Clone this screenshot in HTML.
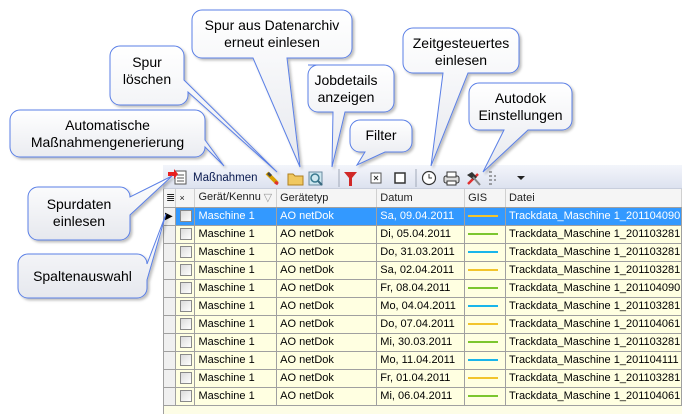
<!DOCTYPE html>
<html><head><meta charset="utf-8"><style>
*{margin:0;padding:0;box-sizing:border-box}
body{width:682px;height:414px;background:#fff;position:relative;overflow:hidden;font-family:"Liberation Sans",Tahoma,sans-serif}
#tb{position:absolute;left:163px;top:165px;width:519px;height:24px;background:linear-gradient(#f3f5fb,#dde2ef);border-bottom:1px solid #c8cedc}
#grid{position:absolute;left:163px;top:189px;width:519px;height:225px;background:#fdfde6;border-left:1px solid #a0a0a0}
table{border-collapse:collapse;font-size:11px;table-layout:fixed}
td{height:18px;border-right:1px solid #a0a0a0;border-bottom:1px solid #a0a0a0;padding-left:3px;white-space:nowrap;overflow:hidden;background:#ffffe1;color:#000}
th{height:18px;font-weight:normal;text-align:left;padding-left:3px;background:#f5f5f5;border-right:1px solid #d0d0d0;border-bottom:1px solid #a0a0a0;white-space:nowrap;overflow:hidden;color:#222}
td.ind{background:#f0f0f0;padding:0}
td.cb{padding-left:4px}
.box{display:inline-block;width:12px;height:12px;border:1px solid #8a8a8a;background:linear-gradient(135deg,#dcdcdc,#fff);vertical-align:middle}
tr.sel td{background:#3399ff;color:#fff}
tr.sel td.ind,tr.sel td.cb{background:#f0f0f0}
tr.sel td.cb{background:#3399ff}
.ln{display:block;margin:0 auto 0 0;width:30px;height:2px}
.y{background:#f2c42c}.g{background:#7cc62e}.b{background:#19b5ea}
.tx{position:absolute;font-size:14px;text-align:center;color:#000;line-height:17px}
</style></head><body>
<div id="tb">
 <svg width="519" height="24" style="position:absolute;left:0;top:0">
  <rect x="12" y="6" width="11" height="13" fill="#fff" stroke="#555"/>
  <path d="M14 10h7M14 13h7M14 16h7" stroke="#555"/>
  <polygon points="5,7 11,7 11,4 15,9 11,14 11,11 5,11" fill="#e82020"/>
  <text x="30" y="16" font-size="11.5" font-family="Liberation Sans" fill="#0a1a50">Maßnahmen</text>
  <path d="M104 8l10 10" stroke="#d8a000" stroke-width="4"/><path d="M105 8l3 3" stroke="#444" stroke-width="3"/><path d="M112 17l3 2" stroke="#e03030" stroke-width="3"/>
  <path d="M125 9h5l2 2h8v9h-15z" fill="#f0c860" stroke="#b08020"/>
  <rect x="146" y="7" width="13" height="13" fill="#cfe8f0" stroke="#6a8aa0"/><circle cx="152" cy="13" r="4" fill="none" stroke="#3a7a90" stroke-width="1.5"/><path d="M155 16l4 4" stroke="#3a6a80" stroke-width="2"/>
  <path d="M176 4v18" stroke="#a0a8b8"/>
  <path d="M181 7h13l-5 6v8h-3v-8z" fill="#d02828"/>
  <rect x="208" y="8" width="10" height="10" fill="#fff" stroke="#555"/><path d="M211 11l4 4M215 11l-4 4" stroke="#333"/>
  <rect x="232" y="8" width="10" height="10" fill="#fff" stroke="#333" stroke-width="1.5"/>
  <path d="M253 4v18" stroke="#a0a8b8"/>
  <circle cx="266" cy="13" r="6.5" fill="#fff" stroke="#333" stroke-width="1.2"/><path d="M266 9v4h3" stroke="#333" fill="none"/>
  <rect x="281" y="11" width="15" height="7" rx="2" fill="#ddd" stroke="#333"/><rect x="284" y="7" width="9" height="5" fill="#fff" stroke="#333"/><rect x="284" y="16" width="9" height="4" fill="#fff" stroke="#333"/>
  <path d="M305 19l10-10" stroke="#e03030" stroke-width="2.5"/><path d="M304 10l5-3 5 5-3 3z" fill="#333"/><path d="M310 12l7 8" stroke="#888" stroke-width="2"/>
  <path d="M326 7h3M326 11h3M326 15h3M326 19h3M331 11h2M331 15h2" stroke="#555"/>
  <polygon points="354,11 362,11 358,15" fill="#222"/>
 </svg>
</div>
<div id="grid">
<table>
<colgroup><col style="width:12px"><col style="width:19px"><col style="width:82px"><col style="width:101px"><col style="width:88px"><col style="width:41px"><col style="width:176px"></colgroup>
<tr><th style="padding-left:2px">≣</th><th style="font-size:9px">×</th><th>Gerät/Kennu <span style="color:#999;float:right;padding-right:4px">▽</span></th><th>Gerätetyp</th><th>Datum</th><th>GIS</th><th>Datei</th></tr>
<tr class="sel"><td class="ind" style="font-size:10px;padding-left:1px;color:#000">▶</td><td class="cb"><span class="box"></span></td><td>Maschine 1</td><td>AO netDok</td><td>Sa, 09.04.2011</td><td><span class="ln y"></span></td><td>Trackdata_Maschine 1_201104090</td></tr>
<tr><td class="ind"></td><td class="cb"><span class="box"></span></td><td>Maschine 1</td><td>AO netDok</td><td>Di, 05.04.2011</td><td><span class="ln g"></span></td><td>Trackdata_Maschine 1_201103281</td></tr>
<tr><td class="ind"></td><td class="cb"><span class="box"></span></td><td>Maschine 1</td><td>AO netDok</td><td>Do, 31.03.2011</td><td><span class="ln b"></span></td><td>Trackdata_Maschine 1_201103281</td></tr>
<tr><td class="ind"></td><td class="cb"><span class="box"></span></td><td>Maschine 1</td><td>AO netDok</td><td>Sa, 02.04.2011</td><td><span class="ln y"></span></td><td>Trackdata_Maschine 1_201103281</td></tr>
<tr><td class="ind"></td><td class="cb"><span class="box"></span></td><td>Maschine 1</td><td>AO netDok</td><td>Fr, 08.04.2011</td><td><span class="ln g"></span></td><td>Trackdata_Maschine 1_201104090</td></tr>
<tr><td class="ind"></td><td class="cb"><span class="box"></span></td><td>Maschine 1</td><td>AO netDok</td><td>Mo, 04.04.2011</td><td><span class="ln b"></span></td><td>Trackdata_Maschine 1_201103281</td></tr>
<tr><td class="ind"></td><td class="cb"><span class="box"></span></td><td>Maschine 1</td><td>AO netDok</td><td>Do, 07.04.2011</td><td><span class="ln y"></span></td><td>Trackdata_Maschine 1_201104061</td></tr>
<tr><td class="ind"></td><td class="cb"><span class="box"></span></td><td>Maschine 1</td><td>AO netDok</td><td>Mi, 30.03.2011</td><td><span class="ln g"></span></td><td>Trackdata_Maschine 1_201103281</td></tr>
<tr><td class="ind"></td><td class="cb"><span class="box"></span></td><td>Maschine 1</td><td>AO netDok</td><td>Mo, 11.04.2011</td><td><span class="ln b"></span></td><td>Trackdata_Maschine 1_201104111</td></tr>
<tr><td class="ind"></td><td class="cb"><span class="box"></span></td><td>Maschine 1</td><td>AO netDok</td><td>Fr, 01.04.2011</td><td><span class="ln y"></span></td><td>Trackdata_Maschine 1_201103281</td></tr>
<tr><td class="ind"></td><td class="cb"><span class="box"></span></td><td>Maschine 1</td><td>AO netDok</td><td>Mi, 06.04.2011</td><td><span class="ln g"></span></td><td>Trackdata_Maschine 1_201104061</td></tr>
</table>
</div>
<svg width="682" height="414" style="position:absolute;left:0;top:0">
<defs><linearGradient id="bg" x1="0" y1="0" x2="0" y2="1"><stop offset="0" stop-color="#ffffff"/><stop offset="1" stop-color="#e6e8ee"/></linearGradient>
<filter id="sh"><feDropShadow dx="2" dy="2" stdDeviation="1.2" flood-color="#000" flood-opacity="0.25"/></filter></defs>
<g fill="url(#bg)" stroke="#5a7fe6" stroke-width="1" filter="url(#sh)">
<path d="M120 46h54a10 10 0 0 1 10 10v24l93 92-89-80v3a10 10 0 0 1-10 10h-58a10 10 0 0 1-10-10v-39a10 10 0 0 1 10-10z"/>
<path d="M202 10h140a10 10 0 0 1 10 10v28a10 10 0 0 1-10 10h-55l13 109-47-109h-51a10 10 0 0 1-10-10v-28a10 10 0 0 1 10-10z"/>
<path d="M308 65h76a10 10 0 0 1 10 10v27a10 10 0 0 1-10 10h-39l-13 55 1-55h-15a10 10 0 0 1-10-10v-27a10 10 0 0 1 10-10z"/>
<path d="M20 110h175a10 10 0 0 1 10 10v20l19 26-19-19v0a10 10 0 0 1-10 10h-175a10 10 0 0 1-10-10v-27a10 10 0 0 1 10-10z"/>
<path d="M360 120h42a10 10 0 0 1 10 10v12a10 10 0 0 1-10 10h-17l-28 13 8-13h-5a10 10 0 0 1-10-10v-12a10 10 0 0 1 10-10z"/>
<path d="M413 28h96a10 10 0 0 1 10 10v25a10 10 0 0 1-10 10h-41l-37 93 12-93h-30a10 10 0 0 1-10-10v-25a10 10 0 0 1 10-10z"/>
<path d="M479 83h83a10 10 0 0 1 10 10v27a10 10 0 0 1-10 10h-34l-45 42 21-42h-25a10 10 0 0 1-10-10v-27a10 10 0 0 1 10-10z"/>
<path d="M38 187h82a10 10 0 0 1 10 10v0l42-21-42 39v15a10 10 0 0 1-10 10h-82a10 10 0 0 1-10-10v-33a10 10 0 0 1 10-10z"/>
<path d="M28 254h109a10 10 0 0 1 10 10v0l19-50-19 66v8a10 10 0 0 1-10 10h-109a10 10 0 0 1-10-10v-24a10 10 0 0 1 10-10z"/>
</g>
</svg>
<div class="tx" style="left:110px;top:54px;width:74px">Spur<br>löschen</div>
<div class="tx" style="left:192px;top:17px;width:160px">Spur aus Datenarchiv<br>erneut einlesen</div>
<div class="tx" style="left:298px;top:72px;width:96px">Jobdetails<br>anzeigen</div>
<div class="tx" style="left:10px;top:117px;width:195px">Automatische<br>Maßnahmengenerierung</div>
<div class="tx" style="left:350px;top:127px;width:62px">Filter</div>
<div class="tx" style="left:403px;top:35px;width:116px">Zeitgesteuertes<br>einlesen</div>
<div class="tx" style="left:469px;top:90px;width:103px">Autodok<br>Einstellungen</div>
<div class="tx" style="left:28px;top:196px;width:102px">Spurdaten<br>einlesen</div>
<div class="tx" style="left:18px;top:268px;width:129px">Spaltenauswahl</div>
</body></html>
